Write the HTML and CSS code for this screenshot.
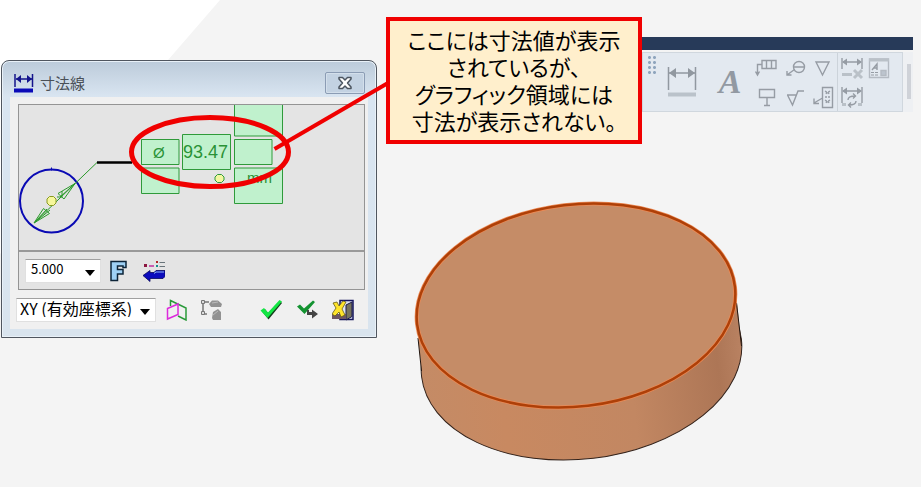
FILE: index.html
```html
<!DOCTYPE html>
<html lang="ja">
<head>
<meta charset="utf-8">
<title>寸法線</title>
<link rel="stylesheet" href="styles.css">
</head>
<body>
<main class="stage">
  <section class="dialog" aria-labelledby="dialog-title">
    <header class="titlebar">
      <svg class="title-icon" viewBox="0 0 20 20" aria-hidden="true">
        <path d="M1 1v13M18.500 1v13M2 6h16" stroke="#14148c" stroke-width="1.500" fill="none"/>
        <path d="M2 6l5-4v8zM18 6l-5-4v8z" fill="#14148c"/>
        <path d="M0 15.500h19v4H0z" fill="#0a0ab8"/>
      </svg>
      <h1 id="dialog-title">寸法線</h1>
      <button class="close" type="button" aria-label="閉じる">
        <svg viewBox="0 0 16 14"><path d="M2 1.500h3.500L8 4l2.500-2.500H14V3l-3.500 4 3.500 4v1.500h-3.500L8 10l-2.500 2.500H2V11l3.500-4L2 3z" fill="#fff" stroke="#4c5560" stroke-width="1.500" stroke-linejoin="round"/></svg>
      </button>
    </header>
    <div class="client">
      <div class="panel">
        <svg class="preview" viewBox="19 105 345 145" role="img" aria-label="寸法プレビュー">
          <g fill="#c0f1cd" stroke="#2f9a3a" stroke-width="1">
            <path d="M234.500 100.500h48v35.500h-48z"/>
            <path d="M234.500 139.500h37.500v25h-37.500z"/>
            <path d="M234.500 168h48v35.500h-48z"/>
            <path d="M182.500 134.500h48v35h-48z"/>
            <path d="M141.500 139.500h37.500v25h-37.500z"/>
            <path d="M141.500 168h37.500v25.500h-37.500z"/>
            <path d="M217.500 174.500h4l2.500 2.500v3l-2.500 2.500h-4l-2.500-2.500v-3z" fill="#f2f7a0"/>
          </g>
          <circle cx="51.500" cy="201" r="31.500" fill="none" stroke="#0a0ab4" stroke-width="2"/>
          <path d="M51.500 167.500v3" stroke="#0a0ab4"/>
          <path d="M97 162.500h35" stroke="#000" stroke-width="2.500"/>
          <g fill="none" stroke="#2a9a2a">
            <path d="M97 162.500L34 223"/>
            <path d="M34 223l9.500-14.500 6 5zM34 223l13-14M34 223l16-13M58 193.500l17-10-11 15.500zM60 197l15-13.500M62 191v6h-5"/>
          </g>
          <path d="M49.500 196.500h4l2.500 2.500v4l-2.500 2.500h-4l-2.500-2.500v-4z" fill="#f6f79c" stroke="#8a9a20"/>
          <g class="preview-text">
            <text x="153" y="158">Ø</text>
            <text x="183" y="158" class="value">93.47</text>
            <text x="247" y="183">mm</text>
          </g>
        </svg>
        <div class="format-row">
          <span class="combo combo-size">
            <select aria-label="文字高さ"><option>5.000</option></select>
          </span>
          <button class="tool font-tool" type="button" aria-label="フォント">
            <svg viewBox="0 0 22 22"><path d="M3 1.500h15v6h-3V6h-5.500v3.500H15V14H9.500v6.500H3z" fill="#9ed0f4" stroke="#0d2438" stroke-width="1.500"/></svg>
          </button>
          <button class="tool" type="button" aria-label="矢印">
            <svg viewBox="0 0 22 22"><path d="M0 15.500l7-5v2h4l2-2h9v6l-2 2H7v3z" fill="#0b0bbd" stroke="#08085e" stroke-width=".8"/><path d="M11 13.500l2-1.500h8" stroke="#8fb7f0" fill="none"/><path d="M1 4h3v3H1z" fill="#8c1740"/><path d="M6 6h5" stroke="#c030a0" stroke-width="1.500"/><path d="M13 1h2v2h-2z" fill="#b02525"/><path d="M13 5h2v2h-2z" fill="#178c8c"/><path d="M16.500 2.500H22M16.500 6.500H22" stroke="#68747a"/></svg>
          </button>
        </div>
      </div>
      <div class="action-row">
        <span class="combo combo-plane">
          <select aria-label="座標系"><option>XY (有効座標系)</option></select>
        </span>
        <button class="tool plane-tool" type="button" aria-label="平面">
          <svg viewBox="0 0 22 22" fill="none" stroke-width="1.500"><path d="M4.500 7V1.500L20 9v12l-8-4" stroke="#2a9a3a"/><path d="M1.500 9.500L12 5v10.500L1.500 20z" stroke="#dc2adc"/></svg>
        </button>
        <button class="tool tree-tool" type="button" aria-label="要素選択" disabled>
          <svg viewBox="0 0 22 22"><path d="M3 3v12M3 3h6M3 15h4" stroke="#777" stroke-width="1.500" fill="none"/><path d="M1.500 1.500h3v3h-3zM1.500 12.500h3v3h-3z" fill="#ddd" stroke="#777"/><path d="M9 5l3-3.500h6L22 5l-1 3H11zM12 19l1-6 5-3 3 3v8h-8z" fill="#929292"/><path d="M12 4l6-1M13 16l5-4" stroke="#bbb"/></svg>
        </button>
        <button class="tool ok-tool" type="button" aria-label="OK">
          <svg viewBox="0 0 22 22"><path d="M2 12.500l3-2.500 3 4L20 2l2 2L8.500 20.500z" fill="#143f1d"/><path d="M.5 11.500L4 9l4 4.500L19.500 1 22 2.500 7.500 19z" fill="#13e644"/></svg>
        </button>
        <button class="tool apply-tool" type="button" aria-label="適用">
          <svg viewBox="0 0 22 22"><path d="M1 7.500l3-2 4 4 9-8 2 1.500-10.500 12z" fill="#149331"/><path d="M11 11v5h5v3.500l6-4.500-6-4.500V13h-3v-2z" fill="#444"/></svg>
        </button>
        <button class="tool" type="button" aria-label="終了">
          <svg viewBox="0 0 22 22"><path d="M8 1.500h13v19H8z" fill="#dfe5f5" stroke="#15155d" stroke-width="1.500"/><path d="M14 6l6-3v14.500L14 21z" fill="#77745d" stroke="#19194d"/><path d="M0 15h14v5H0z" fill="#6e5662"/><path d="M1 4l4-1 2 4 4-5 3 1-4 7 3 6-4 2-2-5-4 4-3-2 4-6z" fill="#ffe42b" stroke="#655a15" stroke-width=".8"/></svg>
        </button>
      </div>
    </div>
  </section>

  <div class="workspace">
    <div class="top-row">
      <p class="callout">ここには寸法値が表示<br>されているが、<br>グラフィック領域には<br>寸法が表示されない。</p>
      <div class="ribbon">
        <div class="ribbon-head"></div>
        <div class="ribbon-body">
          <div class="ribbon-panel" role="toolbar" aria-label="注記">
            <span class="grip"></span>
            <button class="big" type="button" aria-label="寸法">
              <svg viewBox="0 0 30 30"><path d="M1.500 0v23M28.500 0v23M2 6h26" stroke="#9198a0" stroke-width="1.500"/><path d="M2 6l7-5v10zM28 6l-7-5v10z" fill="#9198a0"/><path d="M1 25.500h28v4H1z" fill="#bac2ca"/></svg>
            </button>
            <button class="big letter" type="button" aria-label="注釈">A</button>
            <div class="grid notes">
              <button type="button" aria-label="幾何公差"><svg viewBox="0 0 24 24"><path d="M7 4.500h14v8H7zM11.500 4.500v8M16.500 4.500v8M7 8.500H2.500V18M.5 15.500L2.500 19l2-3.500"/></svg></button>
              <button type="button" aria-label="バルーン"><svg viewBox="0 0 24 24"><circle cx="16" cy="11" r="5.500"/><path d="M10.500 11h11M11.500 13.500L4 19M4 15v4h4.500"/></svg></button>
              <button type="button" aria-label="データム"><svg viewBox="0 0 24 24"><path d="M5 6h13l-6.500 13z"/></svg></button>
              <button type="button" aria-label="データム記号"><svg viewBox="0 0 24 24"><path d="M4.500 4.500h15v8h-15zM12 12.500V20M9 20.500h6"/></svg></button>
              <button type="button" aria-label="表面性状"><svg viewBox="0 0 24 24"><path d="M4 10h10M4.500 10l5 10L15 6h6"/></svg></button>
              <button type="button" aria-label="引出線注記"><svg viewBox="0 0 24 24"><path d="M11.500 2.500h10v20h-10zM11.500 13L3 18M3 13.500v5h5"/><path d="M14 6l5 3m0-3l-5 3m0 3h5m-5 3l5 3m0-3l-5 3" stroke-dasharray="2 1"/></svg></button>
            </div>
            <div class="grid edits">
              <button type="button" aria-label="寸法削除"><svg viewBox="0 0 24 24"><path d="M2 2v11M22 2v11M3 6h18"/><path class="solid" d="M2 6l5-3.500v7zM22 6l-5-3.500v7z"/><path class="pale" d="M2 18.500h10M14 14l8 8m0-8l-8 8"/></svg></button>
              <button type="button" aria-label="注記編集"><svg viewBox="0 0 24 24"><path d="M2.500 3h19v18.500h-19z" stroke="#b4bac2"/><path class="pale" d="M2 4h20"/><path d="M5 14l5-6v6M7 12h3"/><path d="M4 16.500h8M4 19h8" stroke-width="1" stroke-dasharray="3 1"/><path d="M14 14.500h5v5h-5z" fill="#bcc4ce" stroke="#b4bac2"/></svg></button>
              <button type="button" aria-label="寸法更新"><svg viewBox="0 0 24 24"><path d="M2 2v16M22 2v16M3 6h18"/><path class="solid" d="M2 6l5-3.500v7zM22 6l-5-3.500v7z"/><path class="pale" d="M2 19.500h4M18 19.500h4"/><path d="M8 15c0-3 2-4 7-4M13 8.500l2.500 2.500-2.500 2.500M16 16c0 3-2 4-7 4M11 17.500L8.500 20l2.500 2.500"/></svg></button>
            </div>
          </div>
          <div class="ribbon-scroll"><span></span></div>
        </div>
      </div>
    </div>
    <svg class="model" viewBox="400 190 360 280" role="img" aria-label="円柱モデル">
      <defs>
        <linearGradient id="side" x1="416" x2="742" y1="0" y2="0" gradientUnits="userSpaceOnUse">
          <stop offset="0" stop-color="#c48b66"/>
          <stop offset=".25" stop-color="#c88961"/>
          <stop offset=".65" stop-color="#c28762"/>
          <stop offset=".92" stop-color="#ad7656"/>
          <stop offset="1" stop-color="#b98262"/>
        </linearGradient>
      </defs>
      <ellipse cx="581.500" cy="358" rx="161" ry="101" transform="rotate(-6.8 581.500 358)" fill="url(#side)" stroke="#33221a"/>
      <path d="M416 317l5.500 53 320-24-5.500-53z" fill="url(#side)"/>
      <path d="M418 338l3.500 33M736.500 303l5 43" stroke="#20140e" fill="none"/>
      <ellipse cx="576" cy="305.500" rx="160" ry="101" transform="rotate(-6.800 576 305.500)" fill="#c58c67" stroke="#ed8a55" stroke-width="4"/>
      <ellipse cx="576" cy="305.500" rx="160" ry="101" transform="rotate(-6.800 576 305.500)" fill="none" stroke="#ae4008" stroke-width="2.500"/>
    </svg>
  </div>

  <svg class="markup" viewBox="0 0 400 200" aria-hidden="true">
    <ellipse cx="210" cy="152" rx="78.500" ry="34.500" stroke-width="5"/>
    <path d="M274.500 149L388 83" stroke-width="4"/>
  </svg>
</main>
</body>
</html>
```

FILE: styles.css
```css
* { box-sizing: border-box; }

body {
  margin: 0;
  background: #fff;
  color: #000;
  font-family: "Noto Sans CJK JP", sans-serif;
}

button {
  padding: 0;
  border: 0;
  background: none;
  font: inherit;
}

svg { display: block; }

.stage {
  position: relative;
  display: flex;
  align-items: flex-start;
  background: #f4f4f4;
}

.stage::before {
  content: "";
  position: absolute;
  inset: 0;
  background: #fff;
  clip-path: polygon(0 0, 220px 0, 0 254px);
}

/* Dialog window */
.dialog {
  position: relative;
  flex: none;
  width: 376px;
  margin: 60px 0 0 1px;
  padding: 0 8px 8px;
  border: 1px solid #50565f;
  border-radius: 8px 8px 0 0;
  background: linear-gradient(#bccbda, #d9e5f1 36px, #d9e4ee);
  box-shadow: inset 0 0 0 1px #e9f1f8;
}

.titlebar {
  display: flex;
  align-items: center;
  gap: 6px;
  height: 36px;
  padding: 8px 3px 0 4px;
}

.title-icon { width: 20px; height: 20px; }

.titlebar h1 {
  flex: 1;
  margin: 0;
  color: #4a5057;
  font-size: 15px;
  line-height: 20px;
  font-weight: 400;
}

.close {
  display: grid;
  place-items: center;
  width: 40px;
  height: 22px;
  border: 1px solid #8b9cb4;
  border-radius: 2px;
  background: #c3d2e2;
  box-shadow: inset 0 0 0 1px #d3dfeb;
}

.close svg { width: 16px; height: 14px; }

.client {
  padding: 7px 3px 7px 8px;
  background: #f0f0f0;
}

.panel {
  border: 1px solid #949494;
  background: #e4e4e4;
}

.preview { width: 100%; }

.preview-text {
  fill: #2a9236;
  font-family: "Liberation Sans", sans-serif;
  font-size: 15px;
}

.preview-text .value { font-size: 18px; }

.format-row {
  display: flex;
  align-items: center;
  gap: 7px;
  height: 39px;
  padding-left: 6px;
  border-top: 2px solid #999;
}

.action-row {
  display: flex;
  align-items: center;
  height: 32px;
  padding: 7px 11px 0 0;
}

.combo {
  position: relative;
  height: 24px;
  margin-left: -2px;
  border: 1px solid #e0e0e0;
  border-top-color: #a0a0a0;
  background: #fff;
}

.format-row .combo { margin-left: 0; }

.combo::after {
  content: "";
  position: absolute;
  right: 5px;
  top: 10px;
  border: 5px solid transparent;
  border-top: 6px solid #000;
  border-bottom: 0;
  pointer-events: none;
}

.combo select {
  display: block;
  width: 100%;
  height: 18px;
  padding: 0 0 0 3px;
  border: 0;
  appearance: none;
  background: transparent;
  color: #000;
  font-family: "Noto Sans CJK JP", sans-serif;
  font-size: 16px;
  line-height: 18px;
}

.combo-size { width: 76px; }
.combo-size select { font-size: 13px; padding-left: 5px; }
.combo-plane { width: 140px; }

.tool { width: 22px; height: 22px; }
.tool svg { width: 22px; height: 22px; }
.font-tool { margin-right: 6px; }
.plane-tool { margin: 0 12px 0 10px; }
.ok-tool { margin: 0 14px 0 auto; }
.apply-tool { margin-right: 14px; }

/* Callout and ribbon */
.workspace {
  position: relative;
  flex: 1;
  min-width: 0;
}

.top-row {
  display: flex;
  align-items: flex-start;
  padding: 17px 8px 0 9px;
}

.callout {
  flex: none;
  width: 256px;
  margin: 0;
  padding: 7px 0 4px;
  border: 4px solid #f00000;
  background: #ffefcc;
  font-family: "Liberation Sans", "Noto Sans CJK JP", sans-serif;
  font-size: 22px;
  line-height: 27px;
  font-feature-settings: "palt";
  text-align: center;
  white-space: nowrap;
}

.ribbon {
  flex: 1;
  margin-top: 20px;
}

.ribbon-head {
  height: 13px;
  background: #273a59;
}

.ribbon-body {
  display: flex;
  margin-top: 2px;
}

.ribbon-panel {
  display: flex;
  flex: 1;
  align-items: center;
  height: 60px;
  padding-left: 4px;
  border: 1px solid #d0d7de;
  background: #e3e9f0;
}

.grip {
  width: 10px;
  height: 21px;
  margin-bottom: 33px;
  background: radial-gradient(circle, #8fa5bd 1px, transparent 2px) 0 0 / 5px 5px;
}

.big {
  display: grid;
  place-items: center;
  width: 50px;
  height: 50px;
}

.big svg { width: 30px; height: 30px; }

.letter {
  width: 46px;
  color: #9299a2;
  font-family: "Liberation Serif", serif;
  font-size: 34px;
  font-style: italic;
  font-weight: 700;
}

.grid {
  display: grid;
  grid-auto-rows: 29px;
}

.grid button {
  display: grid;
  place-items: center;
}

.grid svg {
  width: 24px;
  height: 24px;
  fill: none;
  stroke: #969ca4;
  stroke-width: 1.4;
}

.grid .solid { fill: #969ca4; stroke: none; }
.grid .pale { stroke: #bac1c8; stroke-width: 3; }
.notes { grid-template-columns: repeat(3, 28px); }
.edits {
  grid-template-columns: repeat(2, 27px);
  border-left: 1px solid #ccd3da;
}

.ribbon-scroll {
  width: 10px;
  padding: 12px 2px 0 4px;
  background: #eef0f3;
}

.ribbon-scroll span {
  display: block;
  height: 35px;
  background: #cfd2d8;
}

.model {
  width: 360px;
  margin: 46px 0 17px 23px;
}

/* Red annotation over the dialog */
.markup {
  position: absolute;
  left: 0;
  top: 0;
  width: 400px;
  height: 200px;
  fill: none;
  stroke: #f00000;
  pointer-events: none;
}
```
